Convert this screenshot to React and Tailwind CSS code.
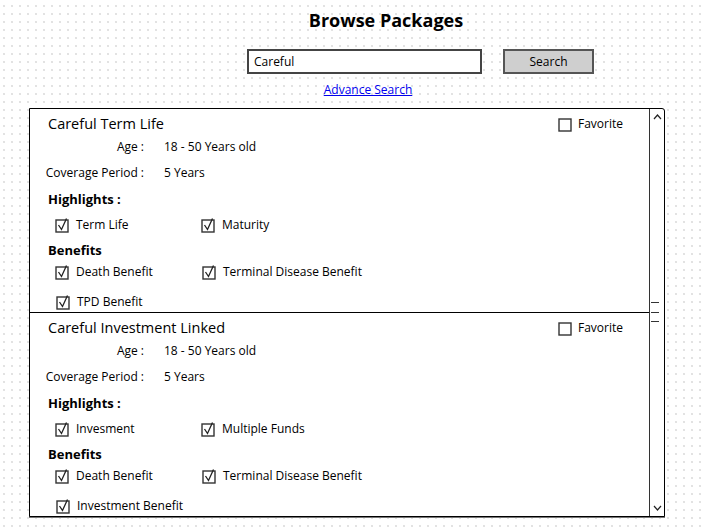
const font = { fontFamily: '"Open Sans", "DejaVu Sans", sans-serif' };

const Check = ({ checked }) => (
  <svg width="15" height="15" viewBox="0 0 15 15" className="shrink-0">
    <rect x="1" y="2" width="12" height="12" fill="white" stroke="#333" strokeWidth="1.4" />
    {checked && <polyline points="3.5,7 6.5,11.5 11.5,0.5" fill="none" stroke="#222" strokeWidth="1.3" />}
  </svg>
);

const Opt = ({ label, w }) => (
  <div className={`flex items-center gap-[6px] ${w}`}>
    <Check checked />
    <span>{label}</span>
  </div>
);

const packages = [
  {
    name: "Careful Term Life",
    highlights: ["Term Life", "Maturity"],
    benefits: ["Death Benefit", "Terminal Disease Benefit", "TPD Benefit"],
  },
  {
    name: "Careful Investment Linked",
    highlights: ["Invesment", "Multiple Funds"],
    benefits: ["Death Benefit", "Terminal Disease Benefit", "Investment Benefit"],
  },
];

const Item = ({ p }) => (
  <div className="h-[203px] shrink-0 text-[12px] text-black">
    <div className="mt-[5px] h-[20px] flex items-center justify-between pl-[18px] pr-[26px]">
      <span className="text-[14.5px]">{p.name}</span>
      <div className="flex items-center gap-[5px]">
        <Check />
        <span>Favorite</span>
      </div>
    </div>
    <div className="mt-[3px] h-[20px] flex items-center">
      <span className="ml-[15px] w-[99px] text-right">Age :</span>
      <span className="ml-[20px]">18 - 50 Years old</span>
    </div>
    <div className="mt-[6px] h-[20px] flex items-center">
      <span className="ml-[15px] w-[99px] text-right">Coverage Period :</span>
      <span className="ml-[20px]">5 Years</span>
    </div>
    <div className="mt-[7px] h-[20px] flex items-center pl-[18px] font-bold text-[13px]">Highlights :</div>
    <div className="mt-[5px] h-[20px] flex items-center pl-[25px]">
      <Opt label={p.highlights[0]} w="w-[146px]" />
      <Opt label={p.highlights[1]} />
    </div>
    <div className="mt-[6px] h-[20px] flex items-center pl-[18px] font-bold text-[13px]">Benefits</div>
    <div className="mt-[1px] h-[20px] flex items-center pl-[25px]">
      <Opt label={p.benefits[0]} w="w-[147px]" />
      <Opt label={p.benefits[1]} />
    </div>
    <div className="mt-[10px] h-[20px] flex items-center pl-[26px]">
      <Opt label={p.benefits[2]} />
    </div>
  </div>
);

export default function App() {
  return (
    <div
      style={font}
      className="w-[702px] h-[528px] overflow-hidden bg-white bg-[radial-gradient(circle,#e2e2e2_0.7px,transparent_1px)] bg-[size:8px_8px] bg-[position:0px_2px]"
    >
      <h1 className="pt-[7px] pl-[70px] text-center text-[18px] leading-[26px] font-bold text-black">Browse Packages</h1>
      <div className="mt-[16px] flex items-center pl-[247px] gap-[21px]">
        <div className="w-[235px] h-[25px] border-2 border-[#444] bg-white flex items-center px-[5px] text-[12px]">Careful</div>
        <div className="w-[91px] h-[25px] border-2 border-[#555] bg-[#cfcfcf] flex items-center justify-center text-[12px]">Search</div>
      </div>
      <div className="mt-[8px] pl-[34px] text-center text-[12px] leading-[16px]">
        <span className="text-[#0000ee] underline">Advance Search</span>
      </div>
      <div className="mt-[10px] ml-[29px] w-[636px] h-[409px] border border-black rounded-tr-[3px] shadow-[0_1px_0_#777] flex bg-white">
        <div className="flex-1 flex flex-col">
          <Item p={packages[0]} />
          <div className="h-px shrink-0 bg-black" />
          <Item p={packages[1]} />
        </div>
        <div className="w-[15px] border-l border-l-[#333] flex flex-col items-center relative">
          <svg width="9" height="6" viewBox="0 0 9 6" className="mt-[5px]">
            <polyline points="1,5 4.5,1 8,5" fill="none" stroke="#222" strokeWidth="1.2" />
          </svg>
          <div className="absolute left-[1px] top-[193px] w-[8px] h-px bg-[#333]" />
          <div className="absolute left-[1px] top-[203px] w-[8px] h-px bg-[#333]" />
          <div className="absolute left-[1px] top-[212px] w-[8px] h-px bg-[#333]" />
          <svg width="9" height="6" viewBox="0 0 9 6" className="mt-auto mb-[5px]">
            <polyline points="1,1 4.5,5 8,1" fill="none" stroke="#222" strokeWidth="1.2" />
          </svg>
        </div>
      </div>
    </div>
  );
}
